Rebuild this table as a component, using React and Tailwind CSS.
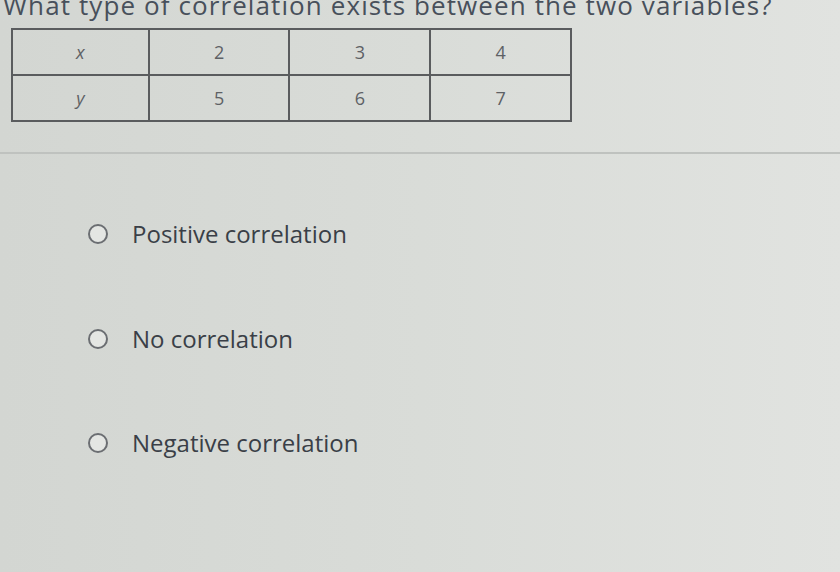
import React from 'react';

const rows = [
  ['x', '2', '3', '4'],
  ['y', '5', '6', '7'],
];

const options = ['Positive correlation', 'No correlation', 'Negative correlation'];

export default function App() {
  return (
    <div className="w-[840px] h-[572px] overflow-hidden bg-gradient-to-r from-[#d3d6d2] via-[#d9dcd8] to-[#e1e3e0] font-['Open_Sans',sans-serif]">
      <h1 className="-mt-[8px] pl-[3px] text-[26px] leading-[26px] tracking-[1.1px] font-medium text-[#48505b] whitespace-nowrap">
        What type of correlation exists between the two variables?
      </h1>
      <table className="ml-[11px] mt-[10px] w-[561px] border-collapse border-2 border-[#5a5c5e] text-[18px] text-[#5e6165]">
        <tbody>
          {rows.map((row, i) => (
            <tr key={i} className="h-[46px]">
              {row.map((cell, j) => (
                <td
                  key={j}
                  className={`border-2 border-[#5a5c5e] text-center ${j === 0 ? 'w-[137px] italic' : 'w-[141px]'}`}
                >
                  {cell}
                </td>
              ))}
            </tr>
          ))}
        </tbody>
      </table>
      <div className="mt-[30px] h-[2px] bg-[#bfc2bf]" />
      <div className="mt-[64px] flex flex-col gap-[72.5px] pl-[88px]">
        {options.map((opt) => (
          <label key={opt} className="flex items-center gap-[24px] h-[32px]">
            <span className="w-[20px] h-[20px] rounded-full border-2 border-[#6b6e72] bg-[#e4e6e3]" />
            <span className="text-[24px] leading-[32px] text-[#3a3f47]">{opt}</span>
          </label>
        ))}
      </div>
    </div>
  );
}
